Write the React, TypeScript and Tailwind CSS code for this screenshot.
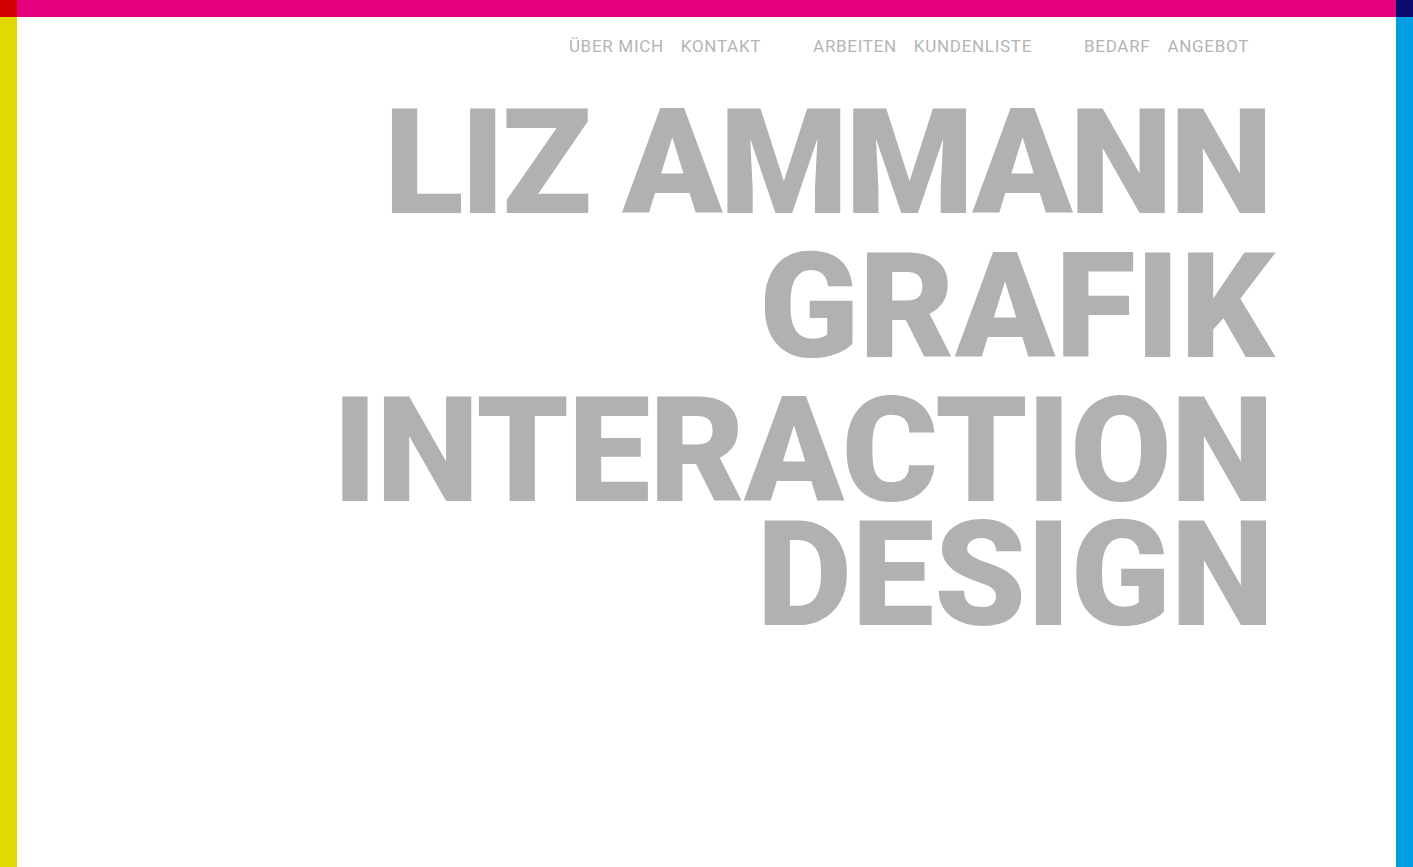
export default function App() {
	return (
		<div className="flex min-h-screen flex-col bg-white" style={{ fontFamily: 'Roboto, "Noto Sans", sans-serif' }}>
			<div className="flex h-[17px]">
				<div className="w-[17px] bg-[#d20000]" />
				<div className="flex-1 bg-[#e5007d]" />
				<div className="w-[17px] bg-[#0b0a6d]" />
			</div>
			<div className="flex flex-1">
				<div className="w-[17px] bg-[#e2d900]" />
				<div className="flex flex-1 flex-col items-end pr-[122px]">
					<nav className="mt-[19px] mr-[25px] flex gap-[52px] text-[17px] leading-[20px] text-[#b4b4b4]">
						<div className="flex gap-[17px]">
							<a href="#" className="tracking-[0.7px]">ÜBER MICH</a>
							<a href="#" className="tracking-[0.7px]">KONTAKT</a>
						</div>
						<div className="flex gap-[17px]">
							<a href="#" className="tracking-[0.7px]">ARBEITEN</a>
							<a href="#" className="tracking-[0.7px]">KUNDENLISTE</a>
						</div>
						<div className="flex gap-[17px]">
							<a href="#" className="tracking-[0.7px]">BEDARF</a>
							<a href="#" className="tracking-[0.7px]">ANGEBOT</a>
						</div>
					</nav>
					<h1 className="mt-[35px] flex flex-col items-end text-[147px] leading-[144px] font-black text-[#b1b1b1]">
						<span className="mr-[4px] block tracking-[-3px]">LIZ AMMANN</span>
						<span className="block">GRAFIK</span>
						<span className="mr-[1px] block tracking-[-1px]">INTERACTION</span>
						<span className="-mt-[20px] block">DESIGN</span>
					</h1>
				</div>
				<div className="w-[17px] bg-[#009ee2]" />
			</div>
		</div>
	);
}
